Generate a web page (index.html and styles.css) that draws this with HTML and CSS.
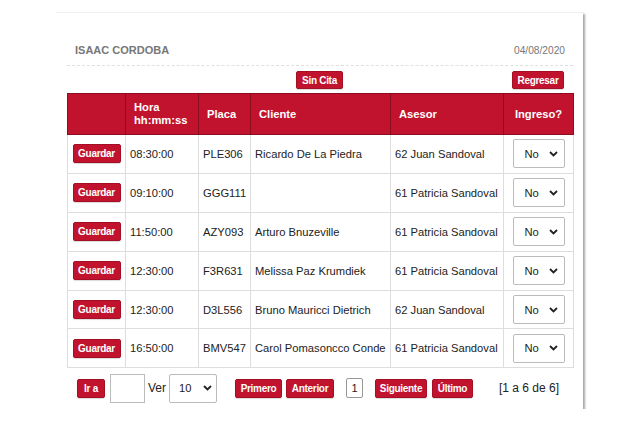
FILE: index.html
```html
<!DOCTYPE html>
<html>
<head>
<meta charset="utf-8">
<link rel="stylesheet" href="styles.css">
</head>
<body>
<div class="card">
  <div class="title-row">
    <span class="name">ISAAC CORDOBA</span>
    <span class="date">04/08/2020</span>
  </div>
  <div class="actions">
    <span class="spacer"></span>
    <button class="btn sin">Sin Cita</button>
    <span class="spacer"></span>
    <button class="btn back">Regresar</button>
  </div>
  <table class="grid">
    <colgroup>
      <col class="w1"><col class="w2"><col class="w3"><col class="w4"><col class="w5"><col class="w6">
    </colgroup>
    <thead>
      <tr><th></th><th>Hora<br>hh:mm:ss</th><th>Placa</th><th>Cliente</th><th>Asesor</th><th class="c">Ingreso?</th></tr>
    </thead>
    <tbody>
      <tr><td class="c"><button class="btn">Guardar</button></td><td>08:30:00</td><td>PLE306</td><td>Ricardo De La Piedra</td><td>62 Juan Sandoval</td><td class="c"><div class="sel"><span>No</span><svg width="9" height="6" viewBox="0 0 9 6"><path d="M1 1l3.5 3.5L8 1" fill="none" stroke="#222" stroke-width="1.8"/></svg></div></td></tr>
      <tr><td class="c"><button class="btn">Guardar</button></td><td>09:10:00</td><td>GGG111</td><td></td><td>61 Patricia Sandoval</td><td class="c"><div class="sel"><span>No</span><svg width="9" height="6" viewBox="0 0 9 6"><path d="M1 1l3.5 3.5L8 1" fill="none" stroke="#222" stroke-width="1.8"/></svg></div></td></tr>
      <tr><td class="c"><button class="btn">Guardar</button></td><td>11:50:00</td><td>AZY093</td><td>Arturo Bnuzeville</td><td>61 Patricia Sandoval</td><td class="c"><div class="sel"><span>No</span><svg width="9" height="6" viewBox="0 0 9 6"><path d="M1 1l3.5 3.5L8 1" fill="none" stroke="#222" stroke-width="1.8"/></svg></div></td></tr>
      <tr><td class="c"><button class="btn">Guardar</button></td><td>12:30:00</td><td>F3R631</td><td>Melissa Paz Krumdiek</td><td>61 Patricia Sandoval</td><td class="c"><div class="sel"><span>No</span><svg width="9" height="6" viewBox="0 0 9 6"><path d="M1 1l3.5 3.5L8 1" fill="none" stroke="#222" stroke-width="1.8"/></svg></div></td></tr>
      <tr><td class="c"><button class="btn">Guardar</button></td><td>12:30:00</td><td>D3L556</td><td>Bruno Mauricci Dietrich</td><td>62 Juan Sandoval</td><td class="c"><div class="sel"><span>No</span><svg width="9" height="6" viewBox="0 0 9 6"><path d="M1 1l3.5 3.5L8 1" fill="none" stroke="#222" stroke-width="1.8"/></svg></div></td></tr>
      <tr><td class="c"><button class="btn">Guardar</button></td><td>16:50:00</td><td>BMV547</td><td>Carol Pomasoncco Conde</td><td>61 Patricia Sandoval</td><td class="c"><div class="sel"><span>No</span><svg width="9" height="6" viewBox="0 0 9 6"><path d="M1 1l3.5 3.5L8 1" fill="none" stroke="#222" stroke-width="1.8"/></svg></div></td></tr>
    </tbody>
  </table>
  <div class="pager">
    <button class="btn ira">Ir a</button>
    <div class="box"></div>
    <span class="ver">Ver</span>
    <div class="sel size"><span>10</span><svg width="9" height="6" viewBox="0 0 9 6"><path d="M1 1l3.5 3.5L8 1" fill="none" stroke="#222" stroke-width="1.8"/></svg></div>
    <button class="btn first">Primero</button>
    <button class="btn prev">Anterior</button>
    <div class="page">1</div>
    <button class="btn next">Siguiente</button>
    <button class="btn last">Último</button>
    <span class="count">[1 a 6 de 6]</span>
  </div>
</div>
</body>
</html>
```
FILE: styles.css
```css
html, body {
  margin: 0;
  padding: 0;
  background: #fff;
}
body {
  font-family: "Liberation Sans", Arial, sans-serif;
  color: #222;
  padding: 12px 0 0 56px;
}
.card {
  width: 527px;
  height: 397px;
  box-sizing: border-box;
  padding: 0 10px 0 11px;
  background: #fff;
  border-top: 1px solid #f0f0f0;
  box-shadow: 2px 2px 2px rgba(0,0,0,0.35);
}
.title-row {
  display: flex;
  justify-content: space-between;
  align-items: center;
  height: 53px;
  box-sizing: border-box;
  padding: 22px 8px 0 8px;
  border-bottom: 1px dashed #e0e0e0;
}
.name {
  font-weight: bold;
  font-size: 11px;
  color: #777;
}
.date {
  font-size: 10.2px;
  color: #777;
}
.actions {
  display: flex;
  align-items: center;
  height: 27px;
  padding-right: 9px;
}
.spacer { flex: 1; }
.btn {
  font-family: "Liberation Sans", Arial, sans-serif;
  font-weight: bold;
  font-size: 10px;
  letter-spacing: -0.3px;
  color: #fff;
  background: #c1132e;
  border: 1px solid #a50f25;
  border-radius: 2px;
  height: 19px;
  padding: 0;
  line-height: 17px;
  box-shadow: 0 1px 1px rgba(0,0,0,0.15);
}
.actions .sin { width: 47px; height: 18px; margin-left: 60px; }
.actions .back { width: 52px; height: 18px; }
.grid {
  border-collapse: collapse;
  table-layout: fixed;
  width: 506px;
  font-size: 11.2px;
}
.w1 { width: 58px; }
.w2 { width: 73px; }
.w3 { width: 52px; }
.w4 { width: 140px; }
.w5 { width: 113px; }
.w6 { width: 70px; }
.grid th {
  background: #c1132e;
  color: #fff;
  font-weight: bold;
  font-size: 11.2px;
  text-align: left;
  padding: 0 0 0 8px;
  height: 40px;
  line-height: 13px;
  border: 1px solid #8e0c20;
}
.grid th.c { text-align: center; padding: 0; }
.grid td {
  height: 37.9px;
  padding: 0 0 0 4px;
  border: 1px solid #ddd;
  white-space: nowrap;
  overflow: hidden;
  color: #222;
}
.grid td.c { text-align: center; padding: 0; }
.grid td .btn { width: 48px; }
.sel {
  display: inline-flex;
  align-items: center;
  justify-content: space-between;
  box-sizing: border-box;
  width: 52px;
  height: 29px;
  border: 1px solid #bbb;
  border-radius: 2px;
  padding: 0 6px 0 11px;
  font-size: 11.2px;
  color: #222;
  vertical-align: middle;
  background: #fff;
}
.pager {
  display: flex;
  align-items: center;
  height: 38px;
  padding-left: 10px;
  font-size: 11.2px;
  margin-top: 1px;
}
.ira { width: 28px; }
.box {
  width: 35px;
  height: 29px;
  box-sizing: border-box;
  border: 1px solid #bbb;
  margin-left: 5px;
}
.ver { margin-left: 3px; color: #222; font-size: 12px; }
.sel.size {
  width: 48px;
  margin-left: 3px;
  padding: 0 4px 0 9px;
}
.first { width: 47px; margin-left: 18px; }
.prev { width: 48px; margin-left: 4px; }
.next { width: 52px; }
.last { width: 41px; margin-left: 5px; }
.page {
  width: 17px;
  height: 20px;
  box-sizing: border-box;
  border: 1px solid #999;
  border-radius: 2px;
  font-size: 11px;
  text-align: center;
  line-height: 18px;
  margin: 0 12px 0 12px;
}
.count {
  margin-left: 26px;
  color: #222;
  font-size: 12px;
}
```
